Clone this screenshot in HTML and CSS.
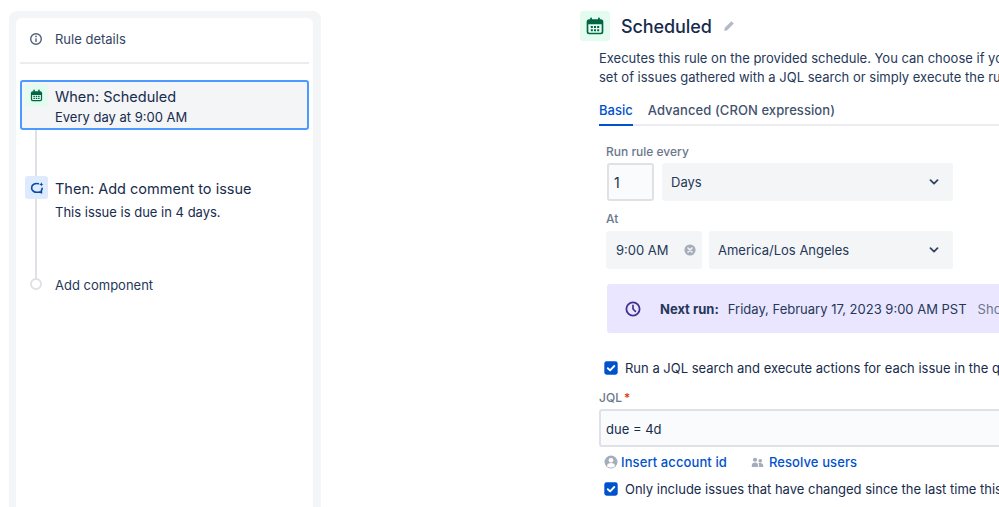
FILE: index.html
```html
<!DOCTYPE html>
<html lang="en">
<head>
<meta charset="utf-8">
<title>Scheduled rule</title>
<link rel="stylesheet" href="styles.css">
</head>
<body>
<div class="page">
  <aside class="rail">
    <div class="rail-inner">
      <div class="details">
        <svg class="details-icon" viewBox="0 0 14 14"><circle cx="7" cy="7" r="5.3" fill="none" stroke="#505f79" stroke-width="1.4"/><rect x="6.3" y="6.2" width="1.4" height="3.8" rx=".5" fill="#505f79"/><circle cx="7" cy="4.4" r=".85" fill="#505f79"/></svg>
        <span>Rule details</span>
      </div>
      <div class="timeline">
        <div class="spine"></div>
        <div class="step step-selected">
          <div class="tile tile-green">
            <svg class="cal-small" viewBox="0 0 24 24"><path fill="#006644" fill-rule="evenodd" d="M6 5h12a3 3 0 0 1 3 3v10a3 3 0 0 1-3 3H6a3 3 0 0 1-3-3V8a3 3 0 0 1 3-3zm-1 6v7a1 1 0 0 0 1 1h12a1 1 0 0 0 1-1v-7H5z"/><rect x="7" y="2.5" width="2.2" height="4.5" rx="1" fill="#006644"/><rect x="14.8" y="2.5" width="2.2" height="4.5" rx="1" fill="#006644"/><path fill="#006644" d="M7 12.5h2.4v2H7zM10.8 12.5h2.4v2h-2.4zM14.6 12.5H17v2h-2.4zM7 15.7h2.4v2H7zM10.8 15.7h2.4v2h-2.4zM14.6 15.7H17v2h-2.4z"/></svg>
          </div>
          <div class="step-text">
            <div class="step-title">When: Scheduled</div>
            <div class="step-sub">Every day at 9:00 AM</div>
          </div>
        </div>
        <div class="step step-action">
          <div class="tile tile-blue">
            <svg class="refresh" viewBox="0 0 14 14"><path fill="none" stroke="#0747a6" stroke-width="1.6" stroke-linecap="round" stroke-linejoin="round" d="M8.4 2.7C5 2 1.6 3.6 1.6 6.9c0 3 2.9 4.5 5.6 4.4.9 0 1.9-.2 2.6-.4l1.7.9-.2-2.1c.5-.7.8-1.5.8-2.4"/><path fill="#0747a6" d="M11.3 1.3l.6 1.5 1.5.6-1.5.6-.6 1.5-.6-1.5-1.5-.6 1.5-.6z"/></svg>
          </div>
          <div class="step-text">
            <div class="step-title">Then: Add comment to issue</div>
            <div class="step-sub">This issue is due in 4 days.</div>
          </div>
        </div>
        <div class="step-add">
          <span class="dot"></span>
          <span>Add component</span>
        </div>
      </div>
    </div>
  </aside>

  <main class="config">
    <header class="head">
      <div class="head-tile">
        <svg class="cal-large" viewBox="0 0 24 24"><path fill="#006644" fill-rule="evenodd" d="M5 4h14a3 3 0 0 1 3 3v12a3 3 0 0 1-3 3H5a3 3 0 0 1-3-3V7a3 3 0 0 1 3-3zm-1 6v9a1 1 0 0 0 1 1h14a1 1 0 0 0 1-1v-9H4z"/><rect x="6.3" y="1.7" width="2" height="4.5" rx=".9" fill="#006644"/><rect x="15.7" y="1.7" width="2" height="4.5" rx=".9" fill="#006644"/><path fill="#006644" d="M7 12h2.4v2.4H7zM10.8 12h2.4v2.4h-2.4zM14.6 12H17v2.4h-2.4zM7 15.8h2.4v2.4H7zM10.8 15.8h2.4v2.4h-2.4zM14.6 15.8H17v2.4h-2.4z"/></svg>
      </div>
      <h1 class="title">Scheduled</h1>
      <svg class="pencil" viewBox="0 0 12 12"><path fill="#b3bac5" d="M8.4 1.2l2.4 2.4-6.6 6.6-3 .7.6-3.1z"/></svg>
    </header>
    <p class="desc">Executes this rule on the provided schedule. You can choose if you want to execute actions for a<br>set of issues gathered with a JQL search or simply execute the rule once per schedule.</p>
    <nav class="tabs">
      <span class="tab tab-active">Basic</span>
      <span class="tab">Advanced (CRON expression)</span>
    </nav>

    <section class="schedule">
      <div class="label">Run rule every</div>
      <div class="row">
        <div class="num">1</div>
        <div class="select select-wide"><span>Days</span><svg class="chev" viewBox="0 0 10 6"><path fill="none" stroke="#344563" stroke-width="1.8" stroke-linecap="round" stroke-linejoin="round" d="M1.5 1.2L5 4.6l3.5-3.4"/></svg></div>
      </div>
      <div class="label label-at">At</div>
      <div class="row row-at">
        <div class="select select-time"><span>9:00 AM</span><svg class="clear" viewBox="0 0 12 12"><circle cx="6" cy="6" r="5.6" fill="#a5adba"/><path stroke="#f4f5f7" stroke-width="1.6" stroke-linecap="round" d="M4 4l4 4M8 4l-4 4"/></svg></div>
        <div class="select select-zone"><span>America/Los Angeles</span><svg class="chev" viewBox="0 0 10 6"><path fill="none" stroke="#344563" stroke-width="1.8" stroke-linecap="round" stroke-linejoin="round" d="M1.5 1.2L5 4.6l3.5-3.4"/></svg></div>
      </div>
      <div class="next">
        <svg class="clock" viewBox="0 0 16 16"><circle cx="8" cy="8" r="6.6" fill="none" stroke="#403294" stroke-width="1.8"/><path fill="none" stroke="#403294" stroke-width="1.7" stroke-linecap="round" stroke-linejoin="round" d="M8 4.4V8l2.4 2.4"/></svg>
        <strong class="next-label">Next run:</strong>
        <span class="next-date">Friday, February 17, 2023 9:00 AM PST</span>
        <span class="next-more">Show more</span>
      </div>
    </section>

    <label class="check check-first">
      <svg class="box" viewBox="0 0 14 14"><rect width="13.4" height="13.4" x=".3" y=".3" rx="2.4" fill="#0052cc"/><path fill="none" stroke="#fff" stroke-width="1.9" stroke-linecap="round" stroke-linejoin="round" d="M3.8 7.2l2.3 2.2 4.2-4.4"/></svg>
      <span>Run a JQL search and execute actions for each issue in the query.</span>
    </label>
    <div class="jql-label">JQL<span class="req">*</span></div>
    <div class="jql-input">due = 4d</div>
    <div class="links">
      <svg class="link-icon" viewBox="0 0 14 14"><circle cx="7" cy="7" r="6.5" fill="#a5adba"/><circle cx="7" cy="5.2" r="2.3" fill="#fff"/><path fill="#fff" d="M3 11.2c0-2.2 1.6-3.3 4-3.3s4 1.1 4 3.3c-1 .9-2.4 1.3-4 1.3s-3-.4-4-1.3z"/></svg>
      <a class="link link-first">Insert account id</a>
      <svg class="people-icon" viewBox="0 0 14 12"><circle cx="4.3" cy="3" r="2.3" fill="#a5adba"/><circle cx="10" cy="4.2" r="2" fill="#a5adba"/><path fill="#a5adba" d="M.8 9c0-2 1.4-3 3.5-3s3.3 1 3.3 3v2H.8zM8.6 11V8.5c0-.7-.2-1.2-.5-1.6.6-.3 1.2-.4 1.9-.4 2 0 3.2 1 3.2 2.7V11z"/></svg>
      <a class="link">Resolve users</a>
    </div>
    <label class="check">
      <svg class="box" viewBox="0 0 14 14"><rect width="13.4" height="13.4" x=".3" y=".3" rx="2.4" fill="#0052cc"/><path fill="none" stroke="#fff" stroke-width="1.9" stroke-linecap="round" stroke-linejoin="round" d="M3.8 7.2l2.3 2.2 4.2-4.4"/></svg>
      <span>Only include issues that have changed since the last time this rule executed</span>
    </label>
  </main>
</div>
</body>
</html>
```

FILE: styles.css
```css
* { box-sizing: border-box; }
html, body { margin: 0; height: 100%; overflow: hidden; background: #fff; }
body { font-family: Inter, "Liberation Sans", sans-serif; color: #172b4d; font-size: 13px; }
.page { display: flex; height: 507px; width: 999px; overflow: hidden; }

/* rail */
.rail { flex: none; width: 312px; margin: 11px 0 0 9px; padding: 7px 8px 0 7px; background: #f4f5f7; border-radius: 8px 8px 0 0; }
.rail-inner { background: #fff; height: 100%; border-radius: 6px 6px 0 0; padding: 0 4px; }
.details { display: flex; align-items: center; height: 46px; padding-left: 9px; padding-bottom: 2px; border-bottom: 2px solid #ebecf0; color: #344563; }
.details-icon { width: 14px; height: 14px; margin-right: 12px; }
.timeline { position: relative; padding-top: 16px; }
.spine { position: absolute; left: 15px; top: 40px; width: 2px; height: 175px; background: #dfe1e6; }
.step { position: relative; display: flex; }
.step-selected { width: 289px; height: 50px; background: #f4f5f7; border: 2px solid #4c9aff; border-radius: 3px; padding: 2px 3px; }
.step-action { height: 50px; margin-top: 46px; padding: 0 5px; }
.tile { flex: none; width: 23px; height: 23px; border-radius: 3px; display: flex; align-items: center; justify-content: center; margin-right: 7px; }
.tile-green { background: #e3fcef; }
.tile-blue { background: #deebff; }
.cal-small { width: 15px; height: 15px; }
.refresh { width: 14px; height: 14px; }
.step-text { padding-top: 3px; }
.step-title { font-size: 14.5px; line-height: 20px; }
.step-sub { font-size: 13px; line-height: 20px; }
.step-action .step-sub { margin-top: 3px; }
.step-add { position: relative; display: flex; align-items: center; margin-top: 51px; padding-left: 10px; color: #253858; }
.dot { flex: none; width: 12px; height: 12px; margin-top: -2px; border: 2px solid #dfe1e6; border-radius: 50%; background: #fff; margin-right: 13px; }

/* config */
.config { flex: none; width: 520px; margin-left: 259px; white-space: nowrap; }
.head { display: flex; align-items: center; margin-top: 11px; height: 30px; }
.head-tile { width: 30px; height: 30px; background: #e3fcef; border-radius: 3px; display: flex; align-items: center; justify-content: center; margin-right: 11px; }
.cal-large { width: 20px; height: 20px; }
.title { margin: 0; font-size: 18px; font-weight: 500; letter-spacing: -.1px; color: #172b4d; }
.pencil { width: 12px; height: 12px; margin-left: 11px; }
.desc { margin: 8px 0 0 19px; line-height: 19px; color: #253858; font-size: 13px; width: 400px; }
.tabs { display: flex; gap: 15px; margin: 13px 0 0 19px; height: 26px; width: 500px; border-bottom: 2px solid #ebecf0; }
.tab { line-height: 20px; color: #42526e; font-weight: 500; letter-spacing: .08px; }
.tab-active { color: #0052cc; height: 26px; border-bottom: 2px solid #0052cc; letter-spacing: 0; }
.schedule { margin-left: 26px; }
.label { margin-top: 18px; font-size: 12px; line-height: 16px; color: #6b778c; font-weight: 500; }
.label-at { margin-top: 10px; }
.row { display: flex; gap: 8px; margin-top: 3px; }
.row-at { gap: 7px; margin-top: 4px; }
.num { width: 47px; height: 38px; margin-left: 1px; border: 2px solid #dfe1e6; border-radius: 3px; background: #fafbfc; padding: 0 5px; font-size: 14px; line-height: 36px; }
.select { height: 38px; background: #f4f5f7; border-radius: 3px; display: flex; align-items: center; justify-content: space-between; color: #253858; font-size: 13px; }
.select-wide { width: 291px; padding: 0 14px 0 9px; }
.select-time { width: 96px; padding: 0 6px 0 10px; }
.select-zone { width: 244px; padding: 0 14px 0 9px; }
.chev { width: 10px; height: 6px; }
.clear { width: 12px; height: 12px; }
.next { display: flex; align-items: center; width: 420px; height: 49px; margin: 15px 0 0 1px; background: #eae6ff; border-radius: 3px; padding-left: 18px; }
.clock { flex: none; width: 16px; height: 16px; margin-right: 19px; }
.next-label { font-weight: 700; margin-right: 9px; color: #253858; }
.next-date { color: #253858; margin-right: 11px; }
.next-more { color: #6b778c; }
.check { display: flex; align-items: center; margin-left: 24px; height: 14px; color: #172b4d; }
.check-first { margin-top: 28px; }
.box { flex: none; width: 14px; height: 14px; margin-right: 7px; }
.jql-label { margin: 15px 0 0 19px; font-size: 12px; line-height: 16px; color: #6b778c; font-weight: 500; }
.req { color: #de350b; margin-left: 2px; }
.jql-input { margin: 3px 0 0 19px; width: 500px; height: 38px; border: 2px solid #dfe1e6; border-radius: 3px; background: #fafbfc; padding: 0 5px; line-height: 36px; font-size: 13px; color: #172b4d; }
.links { display: flex; align-items: center; margin: 7px 0 0 24px; height: 16px; }
.link-icon { flex: none; width: 14px; height: 14px; margin-right: 3px; }
.people-icon { flex: none; width: 13px; height: 11px; margin-right: 5px; }
.link { color: #0052cc; font-weight: 500; letter-spacing: .1px; }
.link-first { margin-right: 24px; }
.links + .check { margin-top: 12px; }
```
